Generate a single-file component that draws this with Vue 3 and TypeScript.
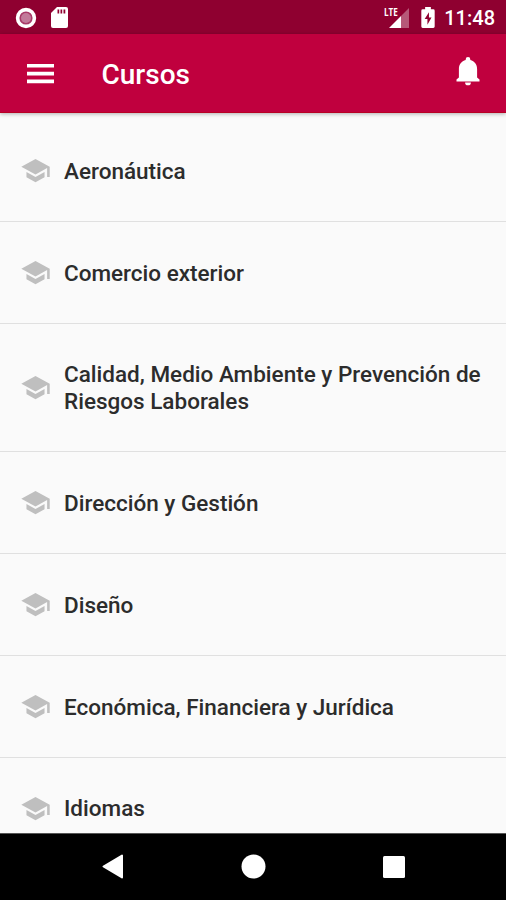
<script setup lang="ts">
interface Course {
  id: number
  name: string
}

const courses: Course[] = [
  { id: 1, name: 'Aeronáutica' },
  { id: 2, name: 'Comercio exterior' },
  { id: 3, name: 'Calidad, Medio Ambiente y Prevención de Riesgos Laborales' },
  { id: 4, name: 'Dirección y Gestión' },
  { id: 5, name: 'Diseño' },
  { id: 6, name: 'Económica, Financiera y Jurídica' },
  { id: 7, name: 'Idiomas' },
]
</script>

<template>
  <div class="screen">
    <div class="status-bar">
      <svg class="record" width="22" height="22" viewBox="0 0 22 22">
        <circle cx="11" cy="11" r="8.4" fill="#a83a68" stroke="#fff" stroke-width="3.6" />
        <circle cx="11" cy="11" r="5" fill="#c27a9a" />
      </svg>
      <svg class="sd-card" width="17" height="21" viewBox="0 0 17 21">
        <path d="M6 0H15a2 2 0 0 1 2 2V19a2 2 0 0 1-2 2H2a2 2 0 0 1-2-2V6Z" fill="#fff" />
        <path d="M6.5 2.5h1.7v4H6.5zM9.5 2.5h1.7v4H9.5zM12.5 2.5h1.8v4h-1.8z" fill="#8f0030" />
      </svg>
      <div class="spacer"></div>
      <div class="network">
        <span class="lte">LTE</span>
        <svg width="20" height="20" viewBox="0 0 20 20">
          <path d="M12 8 20 0V20H12Z" fill="#fff" fill-opacity=".35" />
          <path d="M0 20 12 8V20Z" fill="#fff" />
        </svg>
      </div>
      <svg class="battery" width="14" height="21" viewBox="0 0 14 22">
        <path d="M4 0h6v2.3h2.5A1.5 1.5 0 0 1 14 3.8V20.5A1.5 1.5 0 0 1 12.5 22h-11A1.5 1.5 0 0 1 0 20.5V3.8A1.5 1.5 0 0 1 1.5 2.3H4Z" fill="#fff" />
        <path d="M8 5.5 3.5 12.7H6.4V18.5L10.7 11.1H8Z" fill="#8f0030" />
      </svg>
      <span class="clock">11:48</span>
    </div>

    <header class="app-bar">
      <svg class="menu" width="27" height="20" viewBox="0 0 27 20">
        <path d="M0 0H27V3.6H0ZM0 7.8H27V11.4H0ZM0 15.6H27V19.2H0Z" fill="#fff" />
      </svg>
      <h1 class="title">Cursos</h1>
      <svg class="bell" width="24" height="29" viewBox="0 0 24 29">
        <path d="M12 0a2.3 2.3 0 0 1 2.3 2.3v.8c4.3 1.1 6.8 4.5 6.8 9V20.5L23.5 22.6V24.5H.5V22.6L2.9 20.5V12.1c0-4.5 2.5-7.9 6.8-9v-.8A2.3 2.3 0 0 1 12 0ZM9.1 25.4h5.8a2.9 2.9 0 0 1-5.8 0Z" fill="#fff" />
      </svg>
    </header>

    <ul class="courses">
      <li v-for="course in courses" :key="course.id" class="course">
        <svg class="cap" viewBox="0 0 24 24">
          <path d="M5 13.18v4L12 21l7-3.82v-4L12 17l-7-3.82zM12 3L1 9l11 6 9-4.91V17h2V9L12 3z" fill="#bfbfbf" />
        </svg>
        <span class="name">{{ course.name }}</span>
      </li>
    </ul>

    <nav class="nav-bar">
      <svg width="22" height="25" viewBox="0 0 22 25">
        <path d="M20 1.5V23.5L1.5 12.5Z" fill="#fff" stroke="#fff" stroke-width="2" stroke-linejoin="round" />
      </svg>
      <svg width="25" height="25" viewBox="0 0 25 25">
        <circle cx="12.5" cy="12.5" r="12" fill="#fff" />
      </svg>
      <svg width="22" height="22" viewBox="0 0 22 22">
        <rect width="22" height="22" rx="1.5" fill="#fff" />
      </svg>
    </nav>
  </div>
</template>

<style>
body {
  margin: 0;
}
</style>

<style scoped>
.screen {
  display: flex;
  flex-direction: column;
  width: 506px;
  height: 900px;
  overflow: hidden;
  background: #fafafa;
  font-family: Roboto, sans-serif;
}

.status-bar {
  display: flex;
  flex: none;
  align-items: center;
  box-sizing: border-box;
  height: 34px;
  padding: 1px 11px 0 15px;
  background: #8f0030;
}

.sd-card {
  margin-left: 14px;
}

.spacer {
  flex: 1;
}

.network {
  position: relative;
  display: flex;
  margin-right: 12px;
}

.lte {
  position: absolute;
  top: -1px;
  left: -5px;
  color: #fff;
  font-family: 'Open Sans', sans-serif;
  font-size: 11px;
  font-weight: 700;
  line-height: 10px;
  transform: scaleX(0.74);
  transform-origin: left;
}

.clock {
  margin-left: 9px;
  color: #fff;
  font-size: 20px;
  font-weight: 500;
  line-height: 24px;
}

.app-bar {
  z-index: 1;
  display: flex;
  flex: none;
  align-items: center;
  box-sizing: border-box;
  height: 79px;
  padding: 2px 26.5px 0 26.5px;
  border-bottom: 1px solid #b80024;
  background: #c0003e;
  box-shadow: 0 1px 4px rgba(0, 0, 0, 0.3);
}

.title {
  flex: 1;
  margin: 0 0 0 48px;
  color: #fff;
  font-size: 28px;
  font-weight: 500;
  line-height: 33px;
}

.bell {
  margin-bottom: 6px;
}

.courses {
  flex: 1;
  min-height: 0;
  margin: 0;
  padding: 7px 0 0;
  overflow: hidden;
  list-style: none;
}

.course {
  display: flex;
  align-items: center;
  box-sizing: border-box;
  min-height: 101.9px;
  padding: 37.7px 20px 36.5px 20px;
  border-bottom: 1.4px solid #e0e0e0;
}

.cap {
  flex: none;
  width: 31px;
  height: 31px;
  margin: -3px 13px -2px 0;
}

.name {
  color: #2c2c2c;
  font-size: 22.5px;
  font-weight: 500;
  line-height: 26.5px;
}

.nav-bar {
  display: flex;
  flex: none;
  align-items: center;
  justify-content: space-between;
  box-sizing: border-box;
  height: 67px;
  padding: 0 101px 1px 102px;
  border-top: 1px solid #555;
  background: #000;
}
</style>
